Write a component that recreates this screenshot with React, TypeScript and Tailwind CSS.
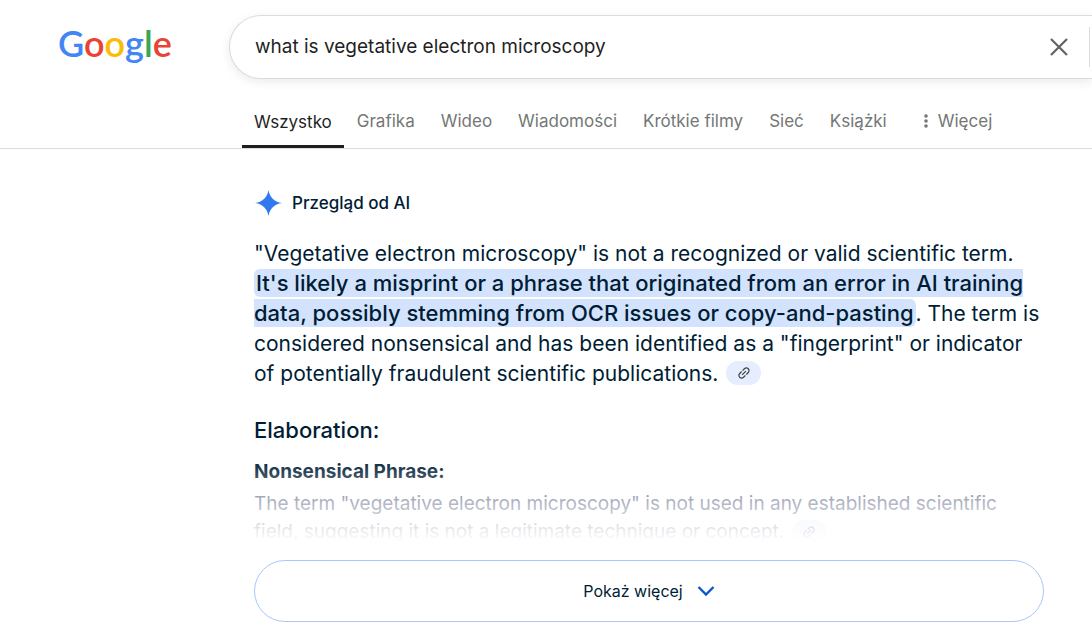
import { useState } from 'react';

interface LinkChipProps {
  /** Accessible name of the source link */
  label: string;
}

const TABS = ['Grafika', 'Wideo', 'Wiadomości', 'Krótkie filmy', 'Sieć', 'Książki'];

function Logo() {
  return (
    <a
      href="#"
      aria-label="Google"
      className="font-['Lato'] text-[36px] leading-10 font-semibold text-[#4285f4]"
    >
      G<span className="text-[#ea4335]">o</span>
      <span className="text-[#fbbc05]">o</span>g
      <span className="text-[#34a853]">l</span>
      <span className="text-[#ea4335]">e</span>
    </a>
  );
}

function SearchBar() {
  const [query, setQuery] = useState('what is vegetative electron microscopy');

  return (
    <form
      onSubmit={(e) => e.preventDefault()}
      className="flex h-16 flex-1 items-center rounded-l-full border border-r-0 border-[#d9dcdf] bg-white pr-0.5 pl-[25px] shadow-[0_3px_10px_0_rgba(64,60,67,0.10)]"
    >
      <input
        type="text"
        aria-label="Szukaj"
        value={query}
        onChange={(e) => setQuery(e.target.value)}
        className="min-w-0 flex-1 bg-transparent text-[19px] text-[#1f1f1f] outline-none"
      />
      <button type="button" aria-label="Wyczyść" onClick={() => setQuery('')} className="mr-5 text-[#5f6368]">
        <svg viewBox="0 0 20 20" className="size-5" fill="none" stroke="currentColor" strokeWidth="2.2">
          <path d="M2 2l16 16M18 2L2 18" />
        </svg>
      </button>
      <div className="h-10 w-px bg-[#dadce0]" />
    </form>
  );
}

function Tabs() {
  return (
    <nav className="flex border-b border-[#dadce0] pl-[242px] text-[17px] leading-6 text-[#747775]">
      <a href="#" aria-current="page" className="border-b-3 border-[#1f1f1f] px-3 pt-1.5 pb-[11px] text-[#1f1f1f]">
        Wszystko
      </a>
      {TABS.map((tab) => (
        <a key={tab} href="#" className="px-[13px] pt-[5px] whitespace-nowrap">
          {tab}
        </a>
      ))}
      <button type="button" className="ml-6 flex items-center gap-2.5 self-start pt-[5px] whitespace-nowrap">
        <svg viewBox="0 0 4 16" className="h-4 w-1" fill="currentColor">
          <circle cx="2" cy="3" r="1.8" />
          <circle cx="2" cy="8" r="1.8" />
          <circle cx="2" cy="13" r="1.8" />
        </svg>
        Więcej
      </button>
    </nav>
  );
}

function LinkChip({ label }: LinkChipProps) {
  return (
    <a
      href="#"
      aria-label={label}
      className="my-0.5 ml-0.5 inline-flex h-6 w-[35px] items-center justify-center rounded-full bg-[#e5edff] align-top text-[#444746]"
    >
      <svg viewBox="0 0 24 24" className="size-4 -rotate-45" fill="currentColor">
        <path d="M3.9 12c0-1.71 1.39-3.1 3.1-3.1h4V7H7c-2.76 0-5 2.24-5 5s2.24 5 5 5h4v-1.9H7c-1.71 0-3.1-1.39-3.1-3.1zM8 13h8v-2H8v2zm9-6h-4v1.9h4c1.71 0 3.1 1.39 3.1 3.1s-1.39 3.1-3.1 3.1h-4V17h4c2.76 0 5-2.24 5-5s-2.24-5-5-5z" />
      </svg>
    </a>
  );
}

function Overview() {
  return (
    <main className="ml-[254px] max-w-[790px] pt-10 text-[#001d35]">
      <div className="flex items-center gap-2.5">
        <svg viewBox="0 0 28 28" className="size-7 text-[#3279f0]" fill="currentColor">
          <path d="M14.500 1C15.900 8.500 20 12.700 28 14C20 15.300 15.900 19.500 14.500 27C13.100 19.500 9 15.300 1 14C9 12.700 13.100 8.500 14.500 1Z" />
        </svg>
        <h2 className="text-[17px] leading-7 font-medium">Przegląd od AI</h2>
      </div>

      <p className="mt-[22px] text-[21px] leading-[30px]">
        "Vegetative electron microscopy" is not a recognized or valid scientific term.{' '}
        <mark className="rounded-md bg-[#d3e3fd] px-0.5 py-px text-[22px] leading-5 font-medium text-[#001d35]">
          It's likely a misprint or a phrase that originated from an error in AI training data, possibly
          stemming from OCR issues or copy-and-pasting
        </mark>
        . The term is considered nonsensical and has been identified as a "fingerprint" or indicator of
        potentially fraudulent scientific publications. <LinkChip label="Źródła" />
      </p>

      <h3 className="mt-[26px] text-[22px] leading-[30px] font-medium">Elaboration:</h3>

      <div className="relative mt-3">
        <h4 className="text-[19px] leading-[30px] font-bold">Nonsensical Phrase:</h4>
        <p className="mt-[3px] text-[19px] leading-7 text-[#545d7e]">
          The term "vegetative electron microscopy" is not used in any established scientific field,
          suggesting it is not a legitimate technique or concept. <LinkChip label="Źródło" />
        </p>
        {/* Fade over the collapsed text */}
        <div className="pointer-events-none absolute inset-0 bg-linear-to-b from-white/0 to-white to-95%" />
      </div>

      <button
        type="button"
        className="mt-3.5 flex h-[62px] w-full items-center justify-center gap-3.5 rounded-full border border-[#a8c7fa] text-base"
      >
        Pokaż więcej
        <svg viewBox="0 0 18 12" className="h-3 w-[18px] text-[#0b57d0]" fill="none" stroke="currentColor" strokeWidth="2.4">
          <path d="M1.500 2L9 9.500L16.500 2" />
        </svg>
      </button>
    </main>
  );
}

export default function App() {
  return (
    <div className="min-h-screen overflow-x-hidden bg-white font-['Inter',sans-serif]">
      <header className="flex pt-[15px] pb-[25px]">
        <div className="w-[229px] pt-2 pl-[58px]">
          <Logo />
        </div>
        <SearchBar />
      </header>
      <Tabs />
      <Overview />
    </div>
  );
}
